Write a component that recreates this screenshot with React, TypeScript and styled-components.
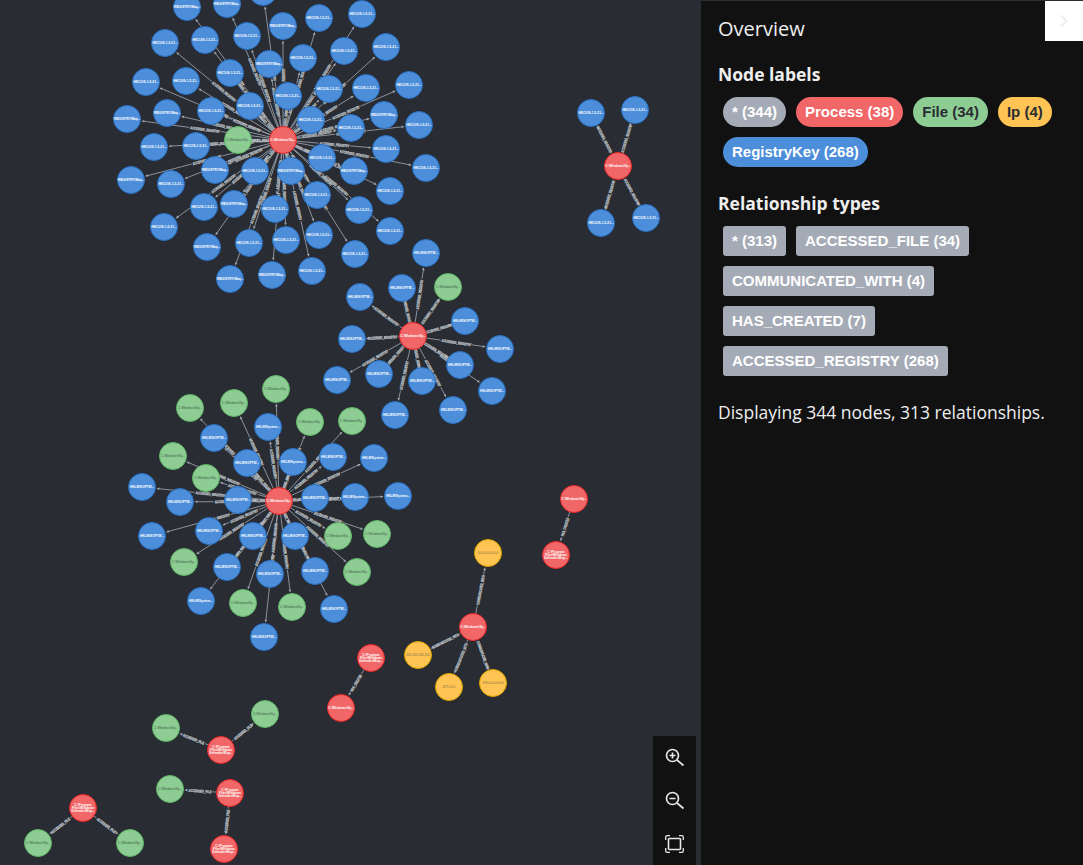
import React from 'react';
import styled, { createGlobalStyle } from 'styled-components';
import { ChevronRight } from 'lucide-react';

type Kind = 'process' | 'file' | 'ip' | 'registry';
type GraphNode = { x: number; y: number; kind: Kind; caption: string[] };
type Cluster = { hub: GraphNode; label: string; targets: GraphNode[] };

const COLORS: Record<Kind, { fill: string; stroke: string; text: string }> = {
	process: { fill: '#f16667', stroke: '#eb2728', text: '#ffffff' },
	file: { fill: '#8dcc93', stroke: '#5db665', text: '#3f5f48' },
	ip: { fill: '#ffc454', stroke: '#d9a300', text: '#75663f' },
	registry: { fill: '#4c8eda', stroke: '#2870c2', text: '#ffffff' },
};

const HKCU = ['HKCU\\S-1-5-21...'];
const MACH = ['\\REGISTRY\\Maq...'];
const SOFT = ['HKLM\\SOFTW...'];
const SYST = ['HKLM\\System...'];
const SYSD = ['C:\\Windows\\Sy...'];
const PROG = ['C:\\Program', 'Files\\Windows', 'Defender\\Msp...'];

const n = (x: number, y: number, kind: Kind, caption: string[]): GraphNode => ({ x, y, kind, caption });
const reg = (list: [number, number, string[]][]) => list.map(([x, y, c]) => n(x, y, 'registry', c));
const file = (list: [number, number][]) => list.map(([x, y]) => n(x, y, 'file', SYSD));

const clusters: Cluster[] = [
	{
		hub: n(283, 140, 'process', SYSD),
		label: 'ACCESSED_REGISTRY',
		targets: [
			...reg([
				[187, 7, MACH], [227, 4, MACH], [263, -8, []], [283, 26, MACH], [319, 18, HKCU], [362, 14, HKCU],
				[165, 43, HKCU], [205, 40, HKCU], [247, 36, HKCU], [344, 51, HKCU], [386, 47, HKCU], [230, 73, HKCU],
				[269, 64, MACH], [303, 58, HKCU], [146, 82, HKCU], [186, 81, HKCU], [409, 85, HKCU], [329, 89, HKCU],
				[366, 88, HKCU], [288, 96, HKCU], [250, 106, HKCU], [211, 111, HKCU], [167, 113, MACH], [384, 115, MACH],
				[127, 119, MACH], [311, 120, HKCU], [351, 128, HKCU], [419, 125, HKCU], [154, 147, HKCU], [196, 146, HKCU],
				[386, 149, HKCU], [322, 158, HKCU], [131, 180, MACH], [171, 184, HKCU], [215, 170, MACH], [255, 171, HKCU],
				[291, 171, MACH], [354, 171, MACH], [426, 168, HKCU], [390, 191, HKCU], [317, 195, HKCU], [204, 207, HKCU],
				[234, 204, MACH], [275, 209, HKCU], [359, 210, HKCU], [164, 227, HKCU], [390, 231, HKCU], [319, 235, HKCU],
				[286, 240, HKCU], [249, 243, HKCU], [207, 247, MACH], [355, 254, HKCU], [272, 275, MACH], [312, 271, HKCU],
				[230, 279, MACH],
			]),
			n(238, 140, 'file', SYSD),
		],
	},
	{
		hub: n(618, 166, 'process', SYSD),
		label: 'ACCESSED_REGISTRY',
		targets: reg([[591, 113, HKCU], [635, 110, HKCU], [601, 223, HKCU], [646, 218, HKCU]]),
	},
	{
		hub: n(413, 336, 'process', SYSD),
		label: 'ACCESSED_REGISTRY',
		targets: [
			...reg([
				[426, 253, SOFT], [402, 288, SOFT], [360, 297, SOFT], [465, 321, SOFT], [352, 339, SOFT], [500, 349, SOFT],
				[460, 365, SOFT], [492, 391, SOFT], [379, 374, SOFT], [422, 381, SOFT], [337, 380, SOFT], [453, 410, SOFT],
				[395, 415, SOFT],
			]),
			n(448, 287, 'file', SYSD),
		],
	},
	{
		hub: n(279, 501, 'process', SYSD),
		label: 'ACCESSED_REGISTRY',
		targets: [
			...file([
				[276, 389], [190, 408], [234, 403], [310, 422], [352, 421], [173, 456], [206, 478], [338, 536], [377, 534],
				[184, 562], [357, 572], [243, 603], [292, 607],
			]),
			...reg([
				[268, 427, SYST], [214, 438, SOFT], [247, 463, SOFT], [293, 462, SYST], [333, 457, SOFT], [374, 458, SYST],
				[142, 487, SOFT], [180, 502, SOFT], [238, 500, SOFT], [315, 498, SOFT], [355, 497, SYST], [398, 496, SYST],
				[152, 536, SOFT], [209, 531, SOFT], [253, 536, SOFT], [295, 536, SOFT], [227, 567, SOFT], [270, 574, SOFT],
				[315, 571, SOFT], [201, 601, SYST], [334, 609, SOFT], [264, 637, SOFT],
			]),
		],
	},
	{
		hub: n(574, 499, 'process', SYSD),
		label: 'HAS_CREATED',
		targets: [n(556, 555, 'process', PROG)],
	},
	{
		hub: n(473, 627, 'process', SYSD),
		label: 'COMMUNICATED_WITH',
		targets: [
			n(488, 553, 'ip', ['0.0.0.0.0.0.0.0']),
			n(418, 655, 'ip', ['255.255.255.255']),
			n(449, 687, 'ip', ['127.0.0.1']),
			n(493, 683, 'ip', ['192.0.0.0.0.0.0']),
		],
	},
	{
		hub: n(371, 658, 'process', PROG),
		label: 'HAS_CREATED',
		targets: [n(341, 708, 'process', SYSD)],
	},
	{
		hub: n(221, 750, 'process', PROG),
		label: 'ACCESSED_FILE',
		targets: file([[265, 714], [166, 728]]),
	},
	{
		hub: n(230, 793, 'process', PROG),
		label: 'ACCESSED_FILE',
		targets: [...file([[170, 789]]), n(224, 849, 'process', PROG)],
	},
	{
		hub: n(83, 808, 'process', PROG),
		label: 'ACCESSED_FILE',
		targets: file([[38, 843], [130, 843]]),
	},
];

const GlobalStyle = createGlobalStyle`
	html, body, #root {
		height: 100%;
		margin: 0;
	}
	body {
		background: #292c33;
		font-family: "Open Sans", sans-serif;
		overflow: hidden;
	}
`;

const Page = styled.div`
	display: flex;
	height: 865px;
	background: #292c33;
`;

const GraphArea = styled.div`
	position: relative;
	flex: 0 0 701px;
	overflow: hidden;
`;

const GraphCanvas = styled.svg`
	display: block;
	width: 701px;
	height: 865px;
`;

const EdgeLine = styled.line`
	stroke: #a5abb6;
	stroke-width: 0.8;
`;

const EdgeHead = styled.polygon`
	fill: #a5abb6;
`;

const EdgeCaption = styled.text`
	fill: #d6d3c8;
	stroke: #aab4be;
	stroke-width: 0.35;
	font-family: "Liberation Sans", Arial, sans-serif;
	font-size: 3.9px;
	font-weight: 700;
	text-anchor: middle;
	dominant-baseline: central;
`;

const NodeDisc = styled.circle<{ $kind: Kind }>`
	fill: ${(p) => COLORS[p.$kind].fill};
	stroke: ${(p) => COLORS[p.$kind].stroke};
	stroke-width: 1;
`;

const NodeCaption = styled.text<{ $kind: Kind }>`
	fill: ${(p) => COLORS[p.$kind].text};
	font-family: "Liberation Sans", Arial, sans-serif;
	font-size: 3.2px;
	font-weight: ${(p) => (p.$kind === 'file' || p.$kind === 'ip' ? 400 : 700)};
	text-anchor: middle;
	dominant-baseline: central;
`;

const ZoomBar = styled.div`
	position: absolute;
	right: 5px;
	bottom: 0;
	width: 43px;
	height: 129px;
	display: flex;
	flex-direction: column;
	align-items: center;
	justify-content: space-around;
	background: #111111;
	color: #e6e6e6;
`;

const Panel = styled.aside`
	position: relative;
	flex: 1;
	margin-top: 1px;
	padding: 0 17px;
	background: #111111;
	color: #eeeeee;
`;

const CloseTab = styled.div`
	position: absolute;
	top: 0;
	right: 0;
	width: 38px;
	height: 40px;
	display: flex;
	align-items: center;
	justify-content: center;
	background: #ffffff;
	color: #eeeeee;
`;

const Title = styled.h3`
	margin: 0;
	padding-top: 14px;
	font-size: 20px;
	line-height: 27px;
	font-weight: 400;
`;

const SectionTitle = styled.h4<{ $top: number }>`
	margin: ${(p) => p.$top}px 0 0;
	font-size: 17.5px;
	line-height: 22px;
	font-weight: 700;
`;

const TagList = styled.div`
	display: flex;
	flex-wrap: wrap;
	gap: 10px;
	margin-top: 12px;
	padding-left: 5px;
`;

const Tag = styled.span<{ $bg: string; $fg: string; $round?: boolean }>`
	height: 30px;
	padding: 0 9px;
	border-radius: ${(p) => (p.$round ? '15px' : '3px')};
	background: ${(p) => p.$bg};
	color: ${(p) => p.$fg};
	font-family: "Liberation Sans", Arial, sans-serif;
	font-size: 15px;
	font-weight: 700;
	line-height: 30px;
	white-space: nowrap;
`;

const Summary = styled.p`
	margin: 25px 0 0;
	font-size: 17.5px;
	line-height: 22px;
`;

const nodeLabels = [
	{ text: '* (344)', bg: '#a5abb6', fg: '#ffffff' },
	{ text: 'Process (38)', bg: '#f16667', fg: '#ffffff' },
	{ text: 'File (34)', bg: '#8dcc93', fg: '#2a2c34' },
	{ text: 'Ip (4)', bg: '#ffc454', fg: '#2a2c34' },
	{ text: 'RegistryKey (268)', bg: '#4c8eda', fg: '#ffffff' },
];

const relationshipTypes = [
	'* (313)',
	'ACCESSED_FILE (34)',
	'COMMUNICATED_WITH (4)',
	'HAS_CREATED (7)',
	'ACCESSED_REGISTRY (268)',
];

const RADIUS = 13.5;
const CHAR_WIDTH = 1.75;

const Edge = ({ from, to, label }: { from: GraphNode; to: GraphNode; label: string }) => {
	const dx = to.x - from.x;
	const dy = to.y - from.y;
	const len = Math.hypot(dx, dy);
	const ux = dx / len;
	const uy = dy / len;
	const tipX = to.x - ux * (RADIUS + 1);
	const tipY = to.y - uy * (RADIUS + 1);
	const baseX = tipX - ux * 3;
	const baseY = tipY - uy * 3;
	const midX = (from.x + to.x) / 2;
	const midY = (from.y + to.y) / 2;
	const textLength = label.length * CHAR_WIDTH;
	// the line stops either side of the caption, as in the neo4j browser
	const half = textLength / 2 + 1;
	let angle = (Math.atan2(dy, dx) * 180) / Math.PI;
	if (angle > 90 || angle < -90) angle += 180;
	return (
		<g>
			<EdgeLine x1={from.x + ux * RADIUS} y1={from.y + uy * RADIUS} x2={midX - ux * half} y2={midY - uy * half} />
			<EdgeLine x1={midX + ux * half} y1={midY + uy * half} x2={baseX} y2={baseY} />
			<EdgeHead
				points={`${tipX},${tipY} ${baseX - uy * 1.3},${baseY + ux * 1.3} ${baseX + uy * 1.3},${baseY - ux * 1.3}`}
			/>
			<EdgeCaption
				textLength={textLength}
				lengthAdjust="spacingAndGlyphs"
				transform={`translate(${midX} ${midY}) rotate(${angle})`}
			>
				{label}
			</EdgeCaption>
		</g>
	);
};

const Node = ({ node }: { node: GraphNode }) => (
	<g>
		<NodeDisc $kind={node.kind} cx={node.x} cy={node.y} r={RADIUS} />
		{node.caption.map((line, i) => (
			<NodeCaption
				key={line}
				$kind={node.kind}
				x={node.x}
				y={node.y + (i - (node.caption.length - 1) / 2) * 3.4}
			>
				{line}
			</NodeCaption>
		))}
	</g>
);

const ZoomInIcon = () => (
	<svg width="20" height="19" viewBox="0 0 20 19" fill="none" stroke="currentColor" strokeWidth="1.7">
		<circle cx="7.5" cy="7.5" r="6" />
		<path d="M12 12l6.5 5.5M4.5 7.5h6M7.5 4.5v6" />
	</svg>
);

const ZoomOutIcon = () => (
	<svg width="20" height="19" viewBox="0 0 20 19" fill="none" stroke="currentColor" strokeWidth="1.7">
		<circle cx="7.5" cy="7.5" r="6" />
		<path d="M12 12l6.5 5.5M4.5 7.5h6" />
	</svg>
);

const FitIcon = () => (
	<svg width="19" height="18" viewBox="0 0 19 18" fill="none" stroke="currentColor" strokeWidth="1.3">
		<rect x="3.5" y="3.5" width="12" height="11" rx="1" strokeWidth="1.6" />
		<path d="M.7 5V2A1.3 1.3 0 0 1 2 .7h3M14 .7h3A1.3 1.3 0 0 1 18.3 2v3M18.3 13v3a1.3 1.3 0 0 1-1.3 1.3h-3M5 17.3H2A1.3 1.3 0 0 1 .7 16v-3" />
	</svg>
);

const App = () => {
	const targets = clusters.flatMap((c) => c.targets);
	return (
		<>
			<GlobalStyle />
			<Page>
				<GraphArea>
					<GraphCanvas viewBox="0 0 701 865">
						{clusters.map((c) =>
							c.targets.map((t) => <Edge key={`${c.hub.x}-${t.x}-${t.y}`} from={c.hub} to={t} label={c.label} />),
						)}
						{targets.map((t) => (
							<Node key={`${t.x}-${t.y}`} node={t} />
						))}
						{clusters.map((c) => (
							<Node key={`${c.hub.x}-${c.hub.y}`} node={c.hub} />
						))}
					</GraphCanvas>
					<ZoomBar>
						<ZoomInIcon />
						<ZoomOutIcon />
						<FitIcon />
					</ZoomBar>
				</GraphArea>
				<Panel>
					<CloseTab>
						<ChevronRight size={20} strokeWidth={2.5} />
					</CloseTab>
					<Title>Overview</Title>
					<SectionTitle $top={21}>Node labels</SectionTitle>
					<TagList>
						{nodeLabels.map((l) => (
							<Tag key={l.text} $bg={l.bg} $fg={l.fg} $round>
								{l.text}
							</Tag>
						))}
					</TagList>
					<SectionTitle $top={25}>Relationship types</SectionTitle>
					<TagList>
						{relationshipTypes.map((r) => (
							<Tag key={r} $bg="#a5abb6" $fg="#ffffff">
								{r}
							</Tag>
						))}
					</TagList>
					<Summary>Displaying 344 nodes, 313 relationships.</Summary>
				</Panel>
			</Page>
		</>
	);
};

export default App;
